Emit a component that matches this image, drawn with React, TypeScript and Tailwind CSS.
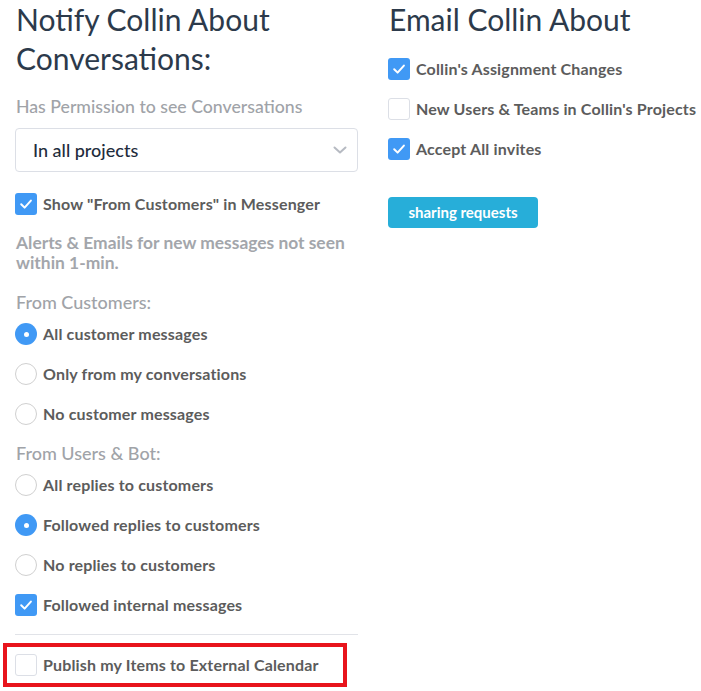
import React from "react";

const font = { fontFamily: "Lato, 'Open Sans', sans-serif" };

function Check({ checked }: { checked: boolean }) {
  return checked ? (
    <span className="w-[22px] h-[22px] shrink-0 rounded-[3px] bg-[#4099f5] flex items-center justify-center">
      <svg width="14" height="14" viewBox="0 0 14 14" fill="none">
        <path d="M2.2 7.3 L5.6 10.6 L11.9 3.6" stroke="white" strokeWidth="2" strokeLinecap="round" strokeLinejoin="round" />
      </svg>
    </span>
  ) : (
    <span className="w-[22px] h-[22px] shrink-0 rounded-[3px] border border-[#dcdfe6] bg-white" />
  );
}

function Radio({ checked }: { checked: boolean }) {
  return checked ? (
    <span className="w-[22px] h-[22px] shrink-0 rounded-full bg-[#4099f5] flex items-center justify-center">
      <span className="w-[5px] h-[5px] rounded-full bg-white" />
    </span>
  ) : (
    <span className="w-[22px] h-[22px] shrink-0 rounded-full border border-[#d0d0d0] bg-white" />
  );
}

function Row({ kind, checked, label }: { kind: "check" | "radio"; checked: boolean; label: string }) {
  return (
    <div className="h-10 flex items-center gap-[6px]">
      {kind === "check" ? <Check checked={checked} /> : <Radio checked={checked} />}
      <span className="text-[16px] tracking-[0.01em] font-bold text-[#5c5c5c] whitespace-nowrap">{label}</span>
    </div>
  );
}

export default function App() {
  return (
    <div className="w-[701px] h-[691px] bg-white overflow-hidden" style={font}>
      <div className="grid grid-cols-[343px_1fr] gap-[30px] px-[15px]">
        {/* Left column */}
        <div>
          <h1 className="text-[30px] leading-[39px] text-[#2c3a4b] pl-[1px]">
            Notify Collin About
            <br />
            Conversations:
          </h1>
          <p className="mt-[17px] text-[17.7px] leading-6 font-medium text-[#a0a3a8] pl-[1px]">Has Permission to see Conversations</p>
          <div className="mt-[9px] h-[44px] rounded-[4px] border border-[#dcdfe6] flex items-center justify-between pl-[17px] pr-[10px]">
            <span className="text-[18px] font-medium text-[#1f2d3d]">In all projects</span>
            <svg width="14" height="10" viewBox="0 0 14 10" fill="none">
              <path d="M1.5 2.5 L7 7.5 L12.5 2.5" stroke="#b6bac2" strokeWidth="2" strokeLinecap="round" strokeLinejoin="round" />
            </svg>
          </div>
          <div className="mt-[12px]">
            <Row kind="check" checked label={'Show "From Customers" in Messenger'} />
          </div>
          <p className="mt-[9px] text-[17.4px] leading-5 font-bold text-[#a3a6ab] pl-[1px]">
            Alerts &amp; Emails for new messages not seen within 1-min.
          </p>
          <p className="mt-[17px] text-[18px] leading-6 font-medium text-[#a0a3a8] pl-[1px]">From Customers:</p>
          <Row kind="radio" checked label="All customer messages" />
          <Row kind="radio" checked={false} label="Only from my conversations" />
          <Row kind="radio" checked={false} label="No customer messages" />
          <p className="mt-[7px] text-[18px] leading-6 font-medium text-[#a0a3a8] pl-[1px]">From Users &amp; Bot:</p>
          <Row kind="radio" checked={false} label="All replies to customers" />
          <Row kind="radio" checked label="Followed replies to customers" />
          <Row kind="radio" checked={false} label="No replies to customers" />
          <Row kind="check" checked label="Followed internal messages" />
          <hr className="mt-[9px] border-t border-[#e1e3e8]" />
          <div className="mt-[8px] -ml-[12px] w-[344px] h-[44px] border-4 border-[#e8141c] flex items-center pl-[8px]">
            <div className="flex items-center gap-[6px]">
              <Check checked={false} />
              <span className="text-[16px] tracking-[0.01em] font-bold text-[#5c5c5c] whitespace-nowrap">Publish my Items to External Calendar</span>
            </div>
          </div>
        </div>

        {/* Right column */}
        <div className="min-w-0">
          <h2 className="text-[30px] leading-[39px] text-[#2c3a4b] pl-[1px]">Email Collin About</h2>
          <div className="mt-[10px]">
            <Row kind="check" checked label="Collin's Assignment Changes" />
            <Row kind="check" checked={false} label="New Users & Teams in Collin's Projects" />
            <Row kind="check" checked label="Accept All invites" />
          </div>
          <button className="mt-[28px] w-[150px] h-[31px] rounded-[4px] bg-[#27aed9] text-white text-[15px] font-bold flex items-center justify-center">
            sharing requests
          </button>
        </div>
      </div>
    </div>
  );
}
